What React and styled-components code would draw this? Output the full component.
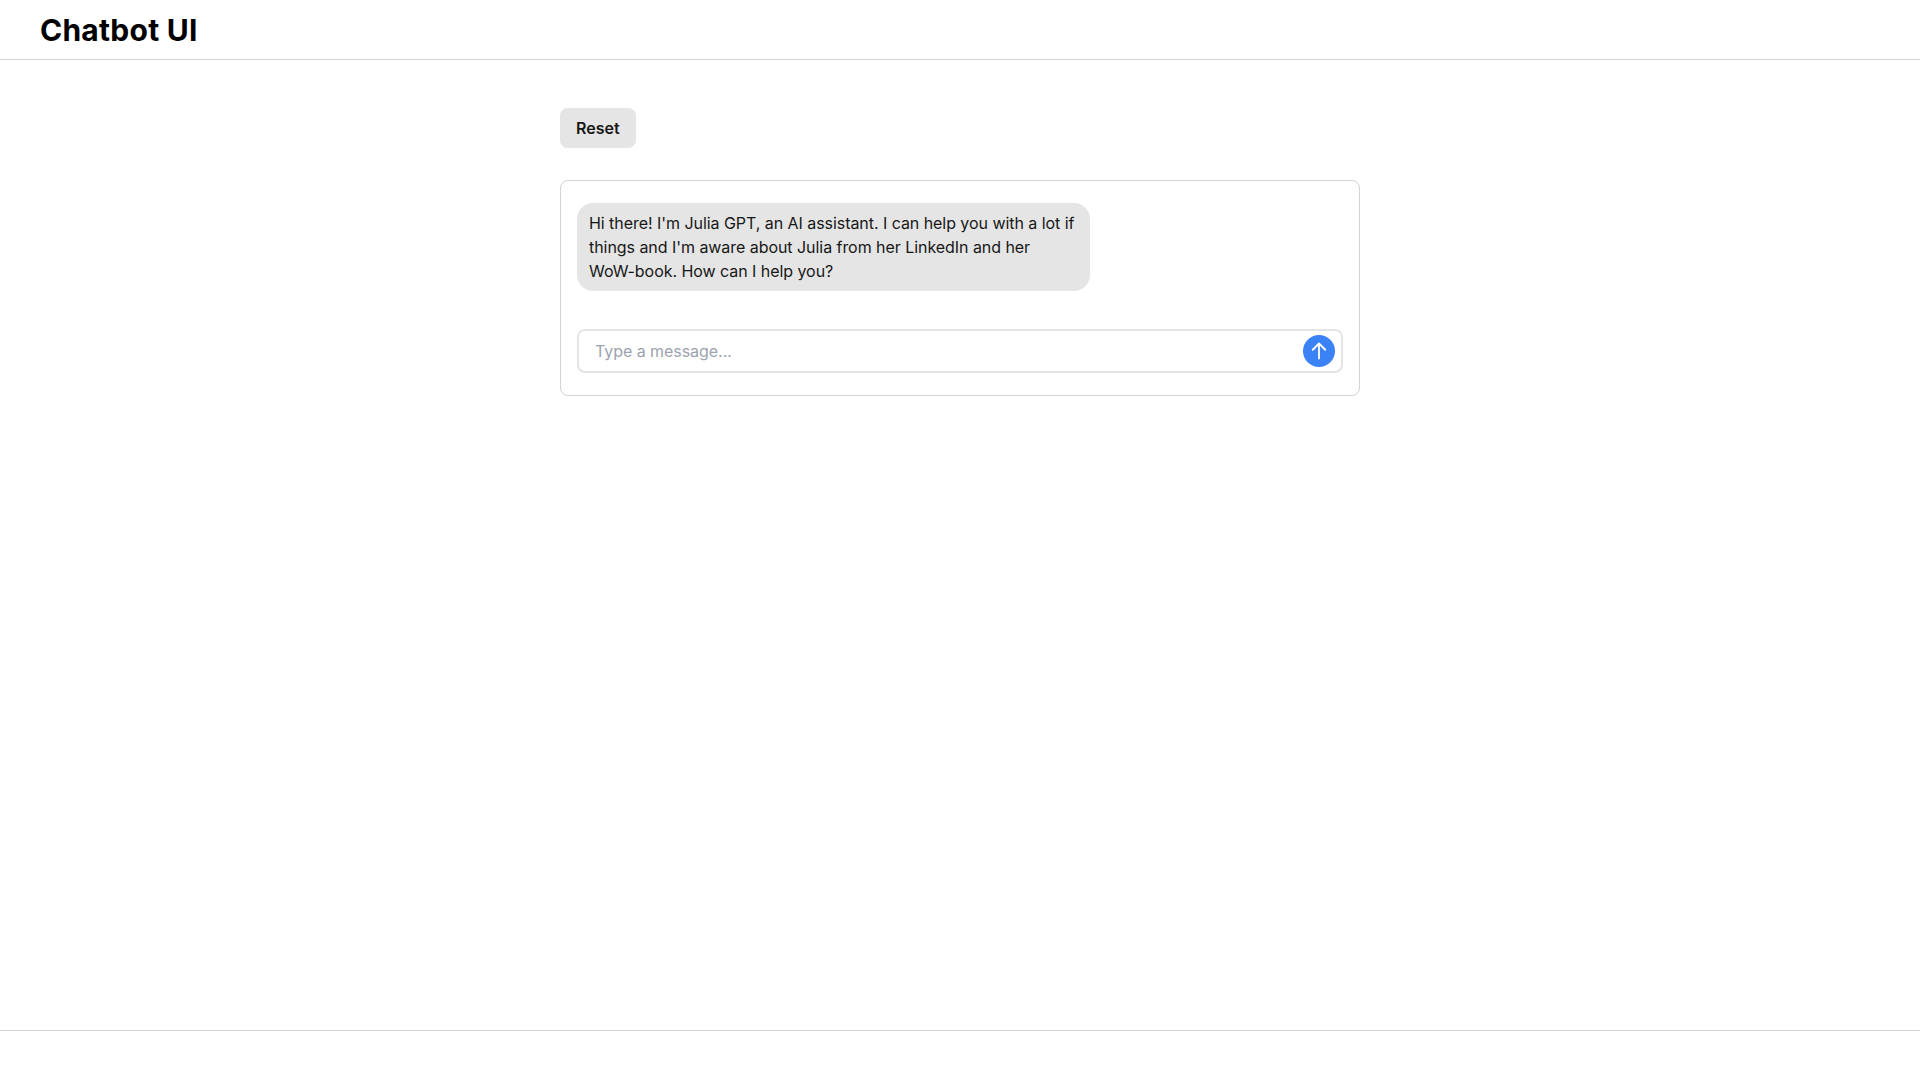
import React from 'react';
import styled, { createGlobalStyle } from 'styled-components';

const GlobalStyle = createGlobalStyle`
	* {
		box-sizing: border-box;
	}
	html, body {
		margin: 0;
		height: 100%;
		background: #ffffff;
		font-family: Inter, "Liberation Sans", sans-serif;
		font-optical-sizing: none;
		color: #171717;
	}
	#root {
		height: 100%;
	}
`;

const Page = styled.div`
	display: flex;
	flex-direction: column;
	height: 100vh;
`;

const Header = styled.header`
	display: flex;
	align-items: center;
	height: 60px;
	padding: 0px 40px;
	border-bottom: 1px solid #d4d4d4;
`;

const Title = styled.h1`
	margin: 0px;
	font-size: 30px;
	font-weight: 700;
	line-height: 36px;
	letter-spacing: 0.25px;
	color: #000000;
`;

const Main = styled.main`
	flex: 1;
	display: flex;
	flex-direction: column;
	align-items: center;
	padding-top: 48px;
`;

const Column = styled.div`
	display: flex;
	flex-direction: column;
	align-items: flex-start;
	gap: 32px;
	width: 800px;
`;

const ResetButton = styled.button`
	height: 40px;
	padding: 0px 16px;
	border: none;
	border-radius: 8px;
	background: #e5e5e5;
	color: #171717;
	font-family: inherit;
	font-size: 16px;
	font-weight: 600;
	cursor: pointer;
`;

const Card = styled.section`
	display: flex;
	flex-direction: column;
	gap: 38px;
	width: 100%;
	padding: 22px 16px;
	border: 1px solid #d4d4d4;
	border-radius: 8px;
`;

const Bubble = styled.div`
	width: 513px;
	padding: 8px 12px;
	border-radius: 16px;
	background: #e5e5e5;
	font-size: 16px;
	line-height: 24px;
	letter-spacing: -0.05px;
`;

const Composer = styled.form`
	display: flex;
	align-items: center;
	height: 44px;
	padding: 0px 6px 0px 16px;
	border: 2px solid #e5e5e5;
	border-radius: 8px;
`;

const MessageInput = styled.input`
	flex: 1;
	border: none;
	outline: none;
	padding: 0px;
	background: transparent;
	font-family: inherit;
	font-size: 16px;
	letter-spacing: -0.05px;
	color: #171717;

	&::placeholder {
		color: #9ca3af;
		opacity: 1;
	}
`;

const SendButton = styled.button`
	display: flex;
	align-items: center;
	justify-content: center;
	width: 32px;
	height: 32px;
	padding: 0px;
	border: none;
	border-radius: 50%;
	background: #3b82f6;
	color: #ffffff;
	cursor: pointer;
`;

const Footer = styled.footer`
	height: 50px;
	border-top: 1px solid #d4d4d4;
`;

function App() {
	return (
		<Page>
			<GlobalStyle />
			<Header>
				<Title>Chatbot UI</Title>
			</Header>
			<Main>
				<Column>
					<ResetButton type="button">Reset</ResetButton>
					<Card>
						<Bubble>
							Hi there! I'm Julia GPT, an AI assistant. I can help you with a lot if things and I'm aware about Julia from her LinkedIn and her WoW-book. How can I help you?
						</Bubble>
						<Composer onSubmit={(e) => e.preventDefault()}>
							<MessageInput placeholder="Type a message..." />
							<SendButton type="submit" aria-label="Send">
								<svg width="20" height="20" viewBox="0 0 24 24" fill="none" stroke="currentColor" strokeWidth="2.2" strokeLinecap="round" strokeLinejoin="round">
									<path d="M4.5 10.5 12 3m0 0 7.5 7.5M12 3v18" />
								</svg>
							</SendButton>
						</Composer>
					</Card>
				</Column>
			</Main>
			<Footer />
		</Page>
	);
}

export default App;
